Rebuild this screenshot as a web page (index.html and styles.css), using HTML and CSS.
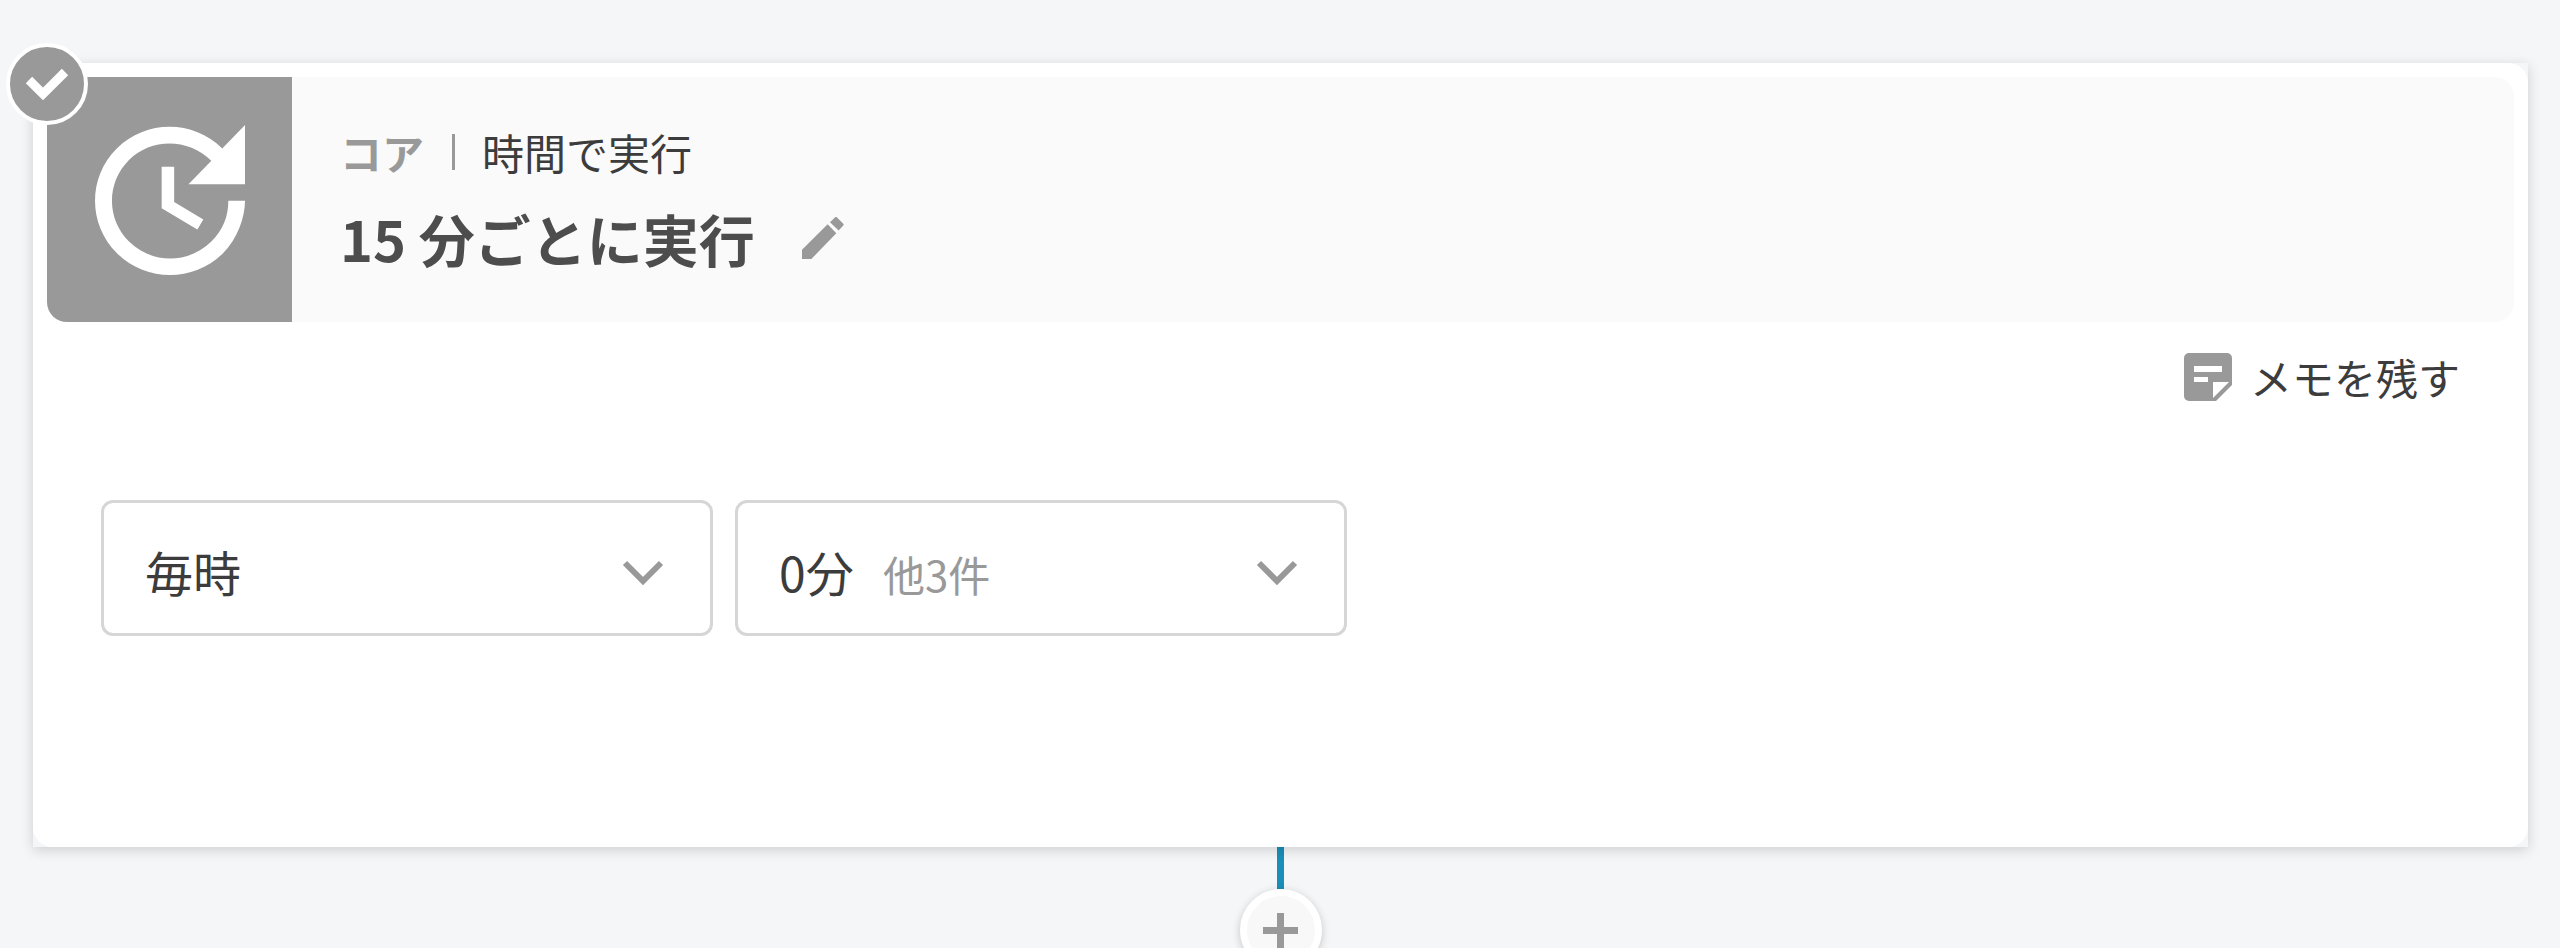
FILE: index.html
```html
<!DOCTYPE html>
<html lang="ja">
<head>
    <meta charset="UTF-8">
    <meta name="viewport" content="width=device-width, initial-scale=1.0">
    <title>15 分ごとに実行</title>
    <link rel="stylesheet" href="styles.css">
</head>

<body>
    <main class="flow">
        <section class="card">
            <div class="card-inner">
                <header class="card-header">
                    <div class="card-icon">
                        <svg viewBox="0 0 24 24" aria-hidden="true">
                            <path d="M21 10.12h-6.78l2.74-2.82c-2.73-2.7-7.15-2.8-9.88-.1-2.73 2.71-2.73 7.08 0 9.79s7.15 2.71 9.88 0C18.32 15.65 19 14.08 19 12.1h2c0 1.98-.88 4.55-2.64 6.29-3.51 3.48-9.21 3.48-12.72 0-3.5-3.47-3.53-9.11-.02-12.58s9.14-3.47 12.65 0L21 3v7.12zM12.5 8v4.25l3.5 2.08-.72 1.21L11 13V8h1.5z"/>
                        </svg>
                    </div>
                    <div class="card-heading">
                        <div class="card-meta">
                            <span class="app-name">コア</span>
                            <span class="divider"></span>
                            <span>時間で実行</span>
                        </div>
                        <div class="card-title">
                            <h1>15 分ごとに実行</h1>
                            <button type="button" class="edit-button" aria-label="名前を編集">
                                <svg viewBox="0 0 24 24" aria-hidden="true">
                                    <path d="M3 17v4h4L17.7 10l-3.7-3.9L3 17zM20.7 6.6c.2-.2.2-.5 0-.7l-2.8-2.8c-.2-.2-.5-.2-.7 0L15 5.2l3.7 3.6 2-2.2z"/>
                                </svg>
                            </button>
                        </div>
                    </div>
                </header>

                <div class="memo-row">
                    <button type="button" class="memo-button">
                        <svg viewBox="0 0 48 48" aria-hidden="true">
                            <path fill-rule="evenodd" d="M5 0h38a5 5 0 0 1 5 5v27L32 48H5a5 5 0 0 1-5-5V5a5 5 0 0 1 5-5zM10 13v6h28v-6zM10 24v5h14v-5zM29 29v16l16-16z"/>
                        </svg>
                        <span>メモを残す</span>
                    </button>
                </div>

                <form class="schedule">
                    <div class="dropdown">
                        <select aria-label="実行間隔">
                            <option selected>毎時</option>
                            <option>毎日</option>
                            <option>毎週</option>
                        </select>
                        <svg class="chevron" viewBox="0 0 40 25" aria-hidden="true">
                            <path d="M2 3l18 18L38 3"/>
                        </svg>
                    </div>
                    <div class="dropdown">
                        <select aria-label="実行する分">
                            <option selected>0分</option>
                            <option>15分</option>
                            <option>30分</option>
                            <option>45分</option>
                        </select>
                        <span class="more">他3件</span>
                        <svg class="chevron" viewBox="0 0 40 25" aria-hidden="true">
                            <path d="M2 3l18 18L38 3"/>
                        </svg>
                    </div>
                </form>
            </div>

            <div class="status-badge">
                <svg viewBox="0 0 42 32" aria-hidden="true">
                    <path d="M3 12l14 14L39 4"/>
                </svg>
            </div>
        </section>

        <div class="connector"></div>
        <button type="button" class="add-button" aria-label="追加">
            <svg viewBox="0 0 35 35" aria-hidden="true">
                <path d="M14 0h7v14h14v7H21v14h-7V21H0v-7h14z"/>
            </svg>
        </button>
    </main>
</body>

</html>
```
FILE: styles.css
```css
* {
    box-sizing: border-box;
}

body {
    margin: 0;
    background-color: #f4f6f8;
    color: #3c3c3c;
    font-family: "Noto Sans CJK JP", sans-serif;
    font-size: 42px;
    line-height: 60px;
}

button {
    border: none;
    padding: 0;
    background: none;
    color: inherit;
    font: inherit;
    cursor: pointer;
}

svg {
    display: block;
    fill: #999;
}

.flow {
    display: flex;
    flex-direction: column;
    align-items: center;
    height: 100vh;
    overflow: hidden;
    padding: 63px 32px 0 33px;
}

.card {
    position: relative;
    flex-shrink: 0;
    width: 100%;
    box-shadow: 0 3px 12px rgba(0, 0, 0, 0.16);
}

.card-inner {
    border-radius: 20px;
    padding: 14px 14px 211px;
    background-color: #fff;
}

.card-header {
    display: flex;
    overflow: hidden;
    border-radius: 20px;
    background-color: #fafafa;
}

.card-icon {
    display: flex;
    align-items: center;
    justify-content: center;
    width: 245px;
    height: 245px;
    background-color: #999;
}

.card-icon svg {
    width: 200px;
    height: 200px;
    fill: #fff;
}

.card-heading {
    display: flex;
    flex-direction: column;
    justify-content: center;
    gap: 16px;
    padding-left: 48px;
}

.card-meta {
    display: flex;
    align-items: center;
}

.app-name {
    color: #999;
    font-weight: bold;
}

.divider {
    width: 3px;
    height: 36px;
    margin: 0 27px 0 28px;
    background-color: #999;
}

.card-title {
    display: flex;
    align-items: center;
    gap: 40px;
}

h1 {
    margin: 0;
    color: #4d4d4d;
    font-size: 56px;
    line-height: 80px;
}

.edit-button svg {
    width: 56px;
    height: 56px;
}

.memo-row {
    display: flex;
    justify-content: flex-end;
    padding: 25px 54px 0 0;
}

.memo-button {
    display: flex;
    align-items: center;
    gap: 18px;
}

.memo-button svg {
    width: 48px;
    height: 48px;
}

.schedule {
    display: flex;
    gap: 22px;
    padding: 93px 54px 0;
}

.dropdown {
    position: relative;
    width: 612px;
}

.dropdown select {
    appearance: none;
    width: 100%;
    height: 136px;
    border: 3px solid #d6d6d6;
    border-radius: 12px;
    padding: 6px 96px 0 41px;
    background-color: #fff;
    color: #3c3c3c;
    font-family: inherit;
    font-size: 48px;
    cursor: pointer;
}

/* count of the other selected values, shown beside the first one */
.more {
    position: absolute;
    top: 44px;
    left: 148px;
    color: #999;
    pointer-events: none;
}

.chevron {
    position: absolute;
    top: 60px;
    right: 50px;
    width: 40px;
    height: 25px;
    fill: none;
    stroke: #999;
    stroke-width: 6;
    overflow: visible;
    pointer-events: none;
}

.status-badge {
    position: absolute;
    top: -20px;
    left: -27px;
    display: flex;
    align-items: center;
    justify-content: center;
    width: 82px;
    height: 82px;
    border: 4px solid #fff;
    border-radius: 50%;
    background-color: #999;
}

.status-badge svg {
    width: 42px;
    height: 32px;
    fill: none;
    stroke: #fff;
    stroke-width: 9;
    overflow: visible;
}

.connector {
    flex-shrink: 0;
    width: 7px;
    height: 42px;
    background-color: #1b8fb9;
}

.add-button {
    display: flex;
    flex-shrink: 0;
    align-items: center;
    justify-content: center;
    width: 82px;
    height: 82px;
    border: 7px solid #fff;
    border-radius: 50%;
    background-color: #f8f8f8;
    box-shadow: 0 2px 8px rgba(0, 0, 0, 0.2);
}

.add-button svg {
    width: 35px;
    height: 35px;
}
```
